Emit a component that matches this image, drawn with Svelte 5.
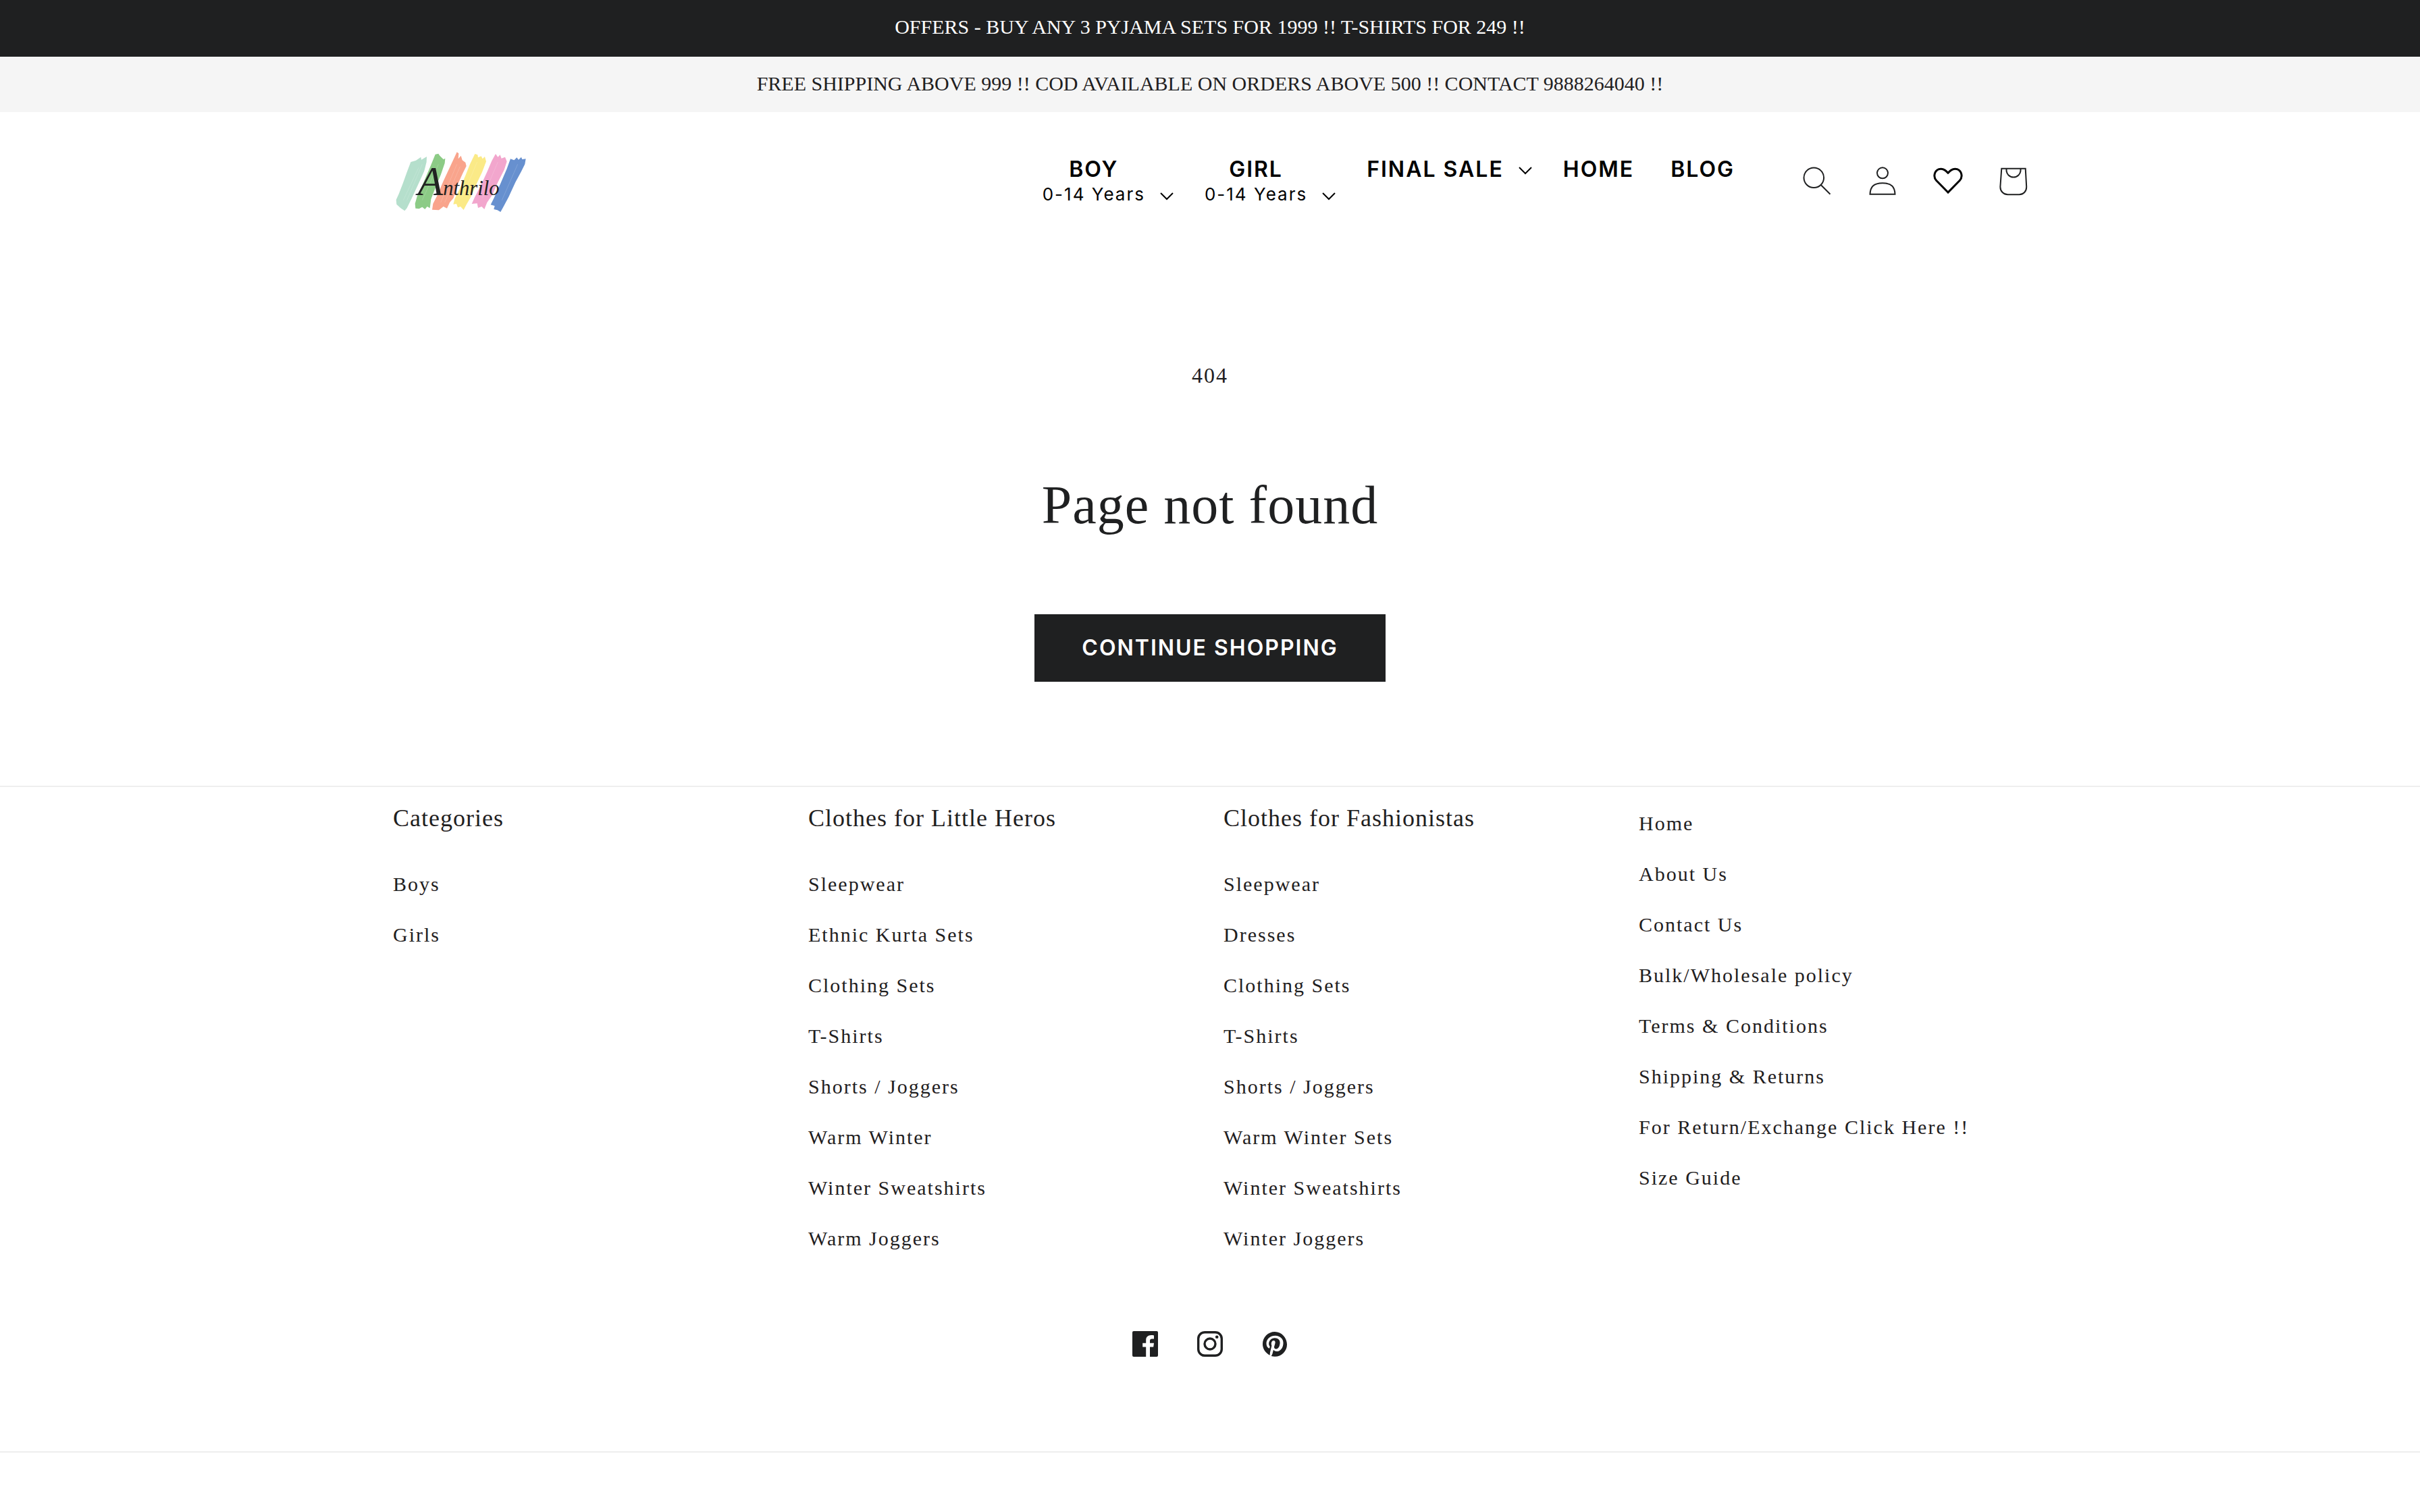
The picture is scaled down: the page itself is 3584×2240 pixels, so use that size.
<script lang="ts">
  type MenuItem = { label: string; sub?: string; dropdown?: boolean };
  type Column = { title?: string; links: string[] };

  const menu: MenuItem[] = [
    { label: 'BOY', sub: '0-14 Years', dropdown: true },
    { label: 'GIRL', sub: '0-14 Years', dropdown: true },
    { label: 'FINAL SALE', dropdown: true },
    { label: 'HOME' },
    { label: 'BLOG' },
  ];

  const columns: Column[] = [
    { title: 'Categories', links: ['Boys', 'Girls'] },
    {
      title: 'Clothes for Little Heros',
      links: ['Sleepwear', 'Ethnic Kurta Sets', 'Clothing Sets', 'T-Shirts', 'Shorts / Joggers', 'Warm Winter', 'Winter Sweatshirts', 'Warm Joggers'],
    },
    {
      title: 'Clothes for Fashionistas',
      links: ['Sleepwear', 'Dresses', 'Clothing Sets', 'T-Shirts', 'Shorts / Joggers', 'Warm Winter Sets', 'Winter Sweatshirts', 'Winter Joggers'],
    },
    {
      links: ['Home', 'About Us', 'Contact Us', 'Bulk/Wholesale policy', 'Terms & Conditions', 'Shipping & Returns', 'For Return/Exchange Click Here !!', 'Size Guide'],
    },
  ];

  let openMenu = $state<string | null>(null);

  function toggle(label: string) {
    openMenu = openMenu === label ? null : label;
  }
</script>

{#snippet menuText(item: MenuItem)}
  <span class="menu-text">
    <span class="menu-label">{item.label}</span>
    {#if item.sub}<span class="menu-sub">{item.sub}</span>{/if}
  </span>
{/snippet}

<div class="bar bar-dark">OFFERS - BUY ANY 3 PYJAMA SETS FOR 1999 !! T-SHIRTS FOR 249 !!</div>
<div class="bar bar-light">FREE SHIPPING ABOVE 999 !! COD AVAILABLE ON ORDERS ABOVE 500 !! CONTACT 9888264040 !!</div>

<header class="page-width header">
  <a class="logo" href="#home" aria-label="Anthrilo">
    <svg viewBox="66 54 600 300" width="200" height="100">
      <path fill="#b5dfcc" d="M145 120 L168 113 L190 98 L192 110 L216 96 L215 120 L205 160 L180 215 L150 280 L128 325 L118 337 L100 325 L82 308 L80 288 L92 262 L110 215 L128 165Z" />
      <path fill="#8ccb86" d="M254 86 L268 83 L274 92 L290 108 L298 104 L296 125 L278 178 L262 215 L235 285 L230 325 L218 318 L208 330 L196 320 L182 328 L166 326 L164 305 L174 270 L200 215 L232 140Z" />
      <path fill="#f9a48c" d="M350 76 L358 82 L356 106 L368 92 L374 112 L388 122 L392 138 L376 170 L350 228 L335 280 L318 300 L306 326 L290 318 L270 334 L240 332 L244 305 L262 270 L290 205 L320 140Z" />
      <path fill="#fbea87" d="M430 84 L442 88 L444 100 L458 94 L464 106 L474 96 L480 118 L462 165 L436 220 L412 275 L392 310 L380 333 L366 318 L354 322 L348 306 L334 308 L340 284 L362 240 L388 180 L408 130Z" />
      <path fill="#f2a6cd" d="M522 84 L532 98 L542 88 L548 104 L564 98 L572 118 L560 155 L532 210 L508 265 L484 300 L472 330 L460 318 L444 324 L440 304 L416 306 L430 275 L456 225 L486 160 L505 115Z" />
      <path fill="#6790cf" d="M588 106 L604 112 L616 100 L624 110 L636 98 L640 108 L656 106 L652 130 L636 162 L610 210 L580 275 L556 320 L544 342 L530 334 L514 330 L518 315 L500 310 L515 280 L544 215 L572 150Z" />
      <g stroke="#fff" stroke-width="2" opacity=".25">
        <path d="M196 130 L128 290M180 145 L112 290M268 130 L196 290M350 130 L278 300M364 140 L296 300M440 120 L372 280M532 120 L464 280M620 130 L550 290" />
      </g>
      <text class="logo-text" x="176" y="268"><tspan class="logo-initial">A</tspan>nthrilo</text>
    </svg>
  </a>

  <nav class="menu" aria-label="Main">
    {#each menu as item}
      {#if item.dropdown}
        <button class="menu-item" aria-expanded={openMenu === item.label} onclick={() => toggle(item.label)}>
          {@render menuText(item)}
          <svg class="chevron" viewBox="0 0 20 12" width="20" height="12"><path d="M1 1 10 10 19 1" /></svg>
        </button>
      {:else}
        <a class="menu-item" href="#{item.label.toLowerCase()}">{@render menuText(item)}</a>
      {/if}
    {/each}
  </nav>

  <div class="icons">
    <button aria-label="Search">
      <svg viewBox="0 0 44 44"><circle cx="17.3" cy="17.3" r="14.8" /><path d="M28 28.2 41.5 41.8" /></svg>
    </button>
    <a href="#account" aria-label="Log in">
      <svg viewBox="0 0 44 44"><circle cx="22" cy="10.3" r="8" /><path d="M3.5 41.8C3.8 31 8.5 25.2 22 25.2S40.2 31 40.5 41.8Z" /></svg>
    </a>
    <a class="wishlist" href="#wishlist" aria-label="Wishlist">
      <svg viewBox="0 0 44 44"><path d="M22 39 4.8 21.5C-1 15 2.5 4.5 11.5 4.3 16 4.2 18.5 6.8 22 10.2 25.5 6.8 28 4.2 32.5 4.3 41.5 4.5 45 15 39.2 21.5Z" /></svg>
    </a>
    <a href="#cart" aria-label="Cart">
      <svg viewBox="0 0 44 44"><path d="M4.3 3.7H39.7L41.2 30.5C41.4 37.5 36.5 42.3 30.5 42.3H13.5C7.5 42.3 2.2 37.5 2.4 30.5ZM11.5 4V6A10.5 10.5 0 0 0 32.5 6V4" /></svg>
    </a>
  </div>
</header>

<main class="not-found">
  <p>404</p>
  <h1>Page not found</h1>
  <a class="btn" href="#collections">CONTINUE SHOPPING</a>
</main>

<footer>
  <div class="page-width columns">
    {#each columns as column}
      <div>
        {#if column.title}<h2>{column.title}</h2>{/if}
        <ul class:untitled={!column.title}>
          {#each column.links as link}
            <li><a href="#{link}">{link}</a></li>
          {/each}
        </ul>
      </div>
    {/each}
  </div>

  <div class="social">
    <a href="#facebook" aria-label="Facebook">
      <svg viewBox="0 0 38 38"><path d="M2 0H36Q38 0 38 2V36Q38 38 36 38H26V23.500H31.200L32 17.800H26V14.200C26 12.400 27 11.600 29 11.600H32V6.400C31 6.200 29.500 6 27.800 6 23 6 20.200 8.800 20.200 13.500V17.800H15.200V23.500H20.200V38H2Q0 38 0 36V2Q0 0 2 0Z" /></svg>
    </a>
    <a href="#instagram" aria-label="Instagram">
      <svg viewBox="0 0 38 38">
        <rect x="1.700" y="1.700" width="34.600" height="34.600" rx="9.500" fill="none" stroke="currentColor" stroke-width="3.400" />
        <circle cx="19" cy="19" r="8" fill="none" stroke="currentColor" stroke-width="3.400" />
        <circle cx="29.200" cy="8.800" r="2.300" />
      </svg>
    </a>
    <a href="#pinterest" aria-label="Pinterest">
      <svg viewBox="0 0 24 24"><path d="M12 .6C5.7.6.6 5.7.6 12c0 4.700 2.800 8.700 6.800 10.500 0-.8 0-1.800.2-2.700l1.500-6.200s-.4-.7-.4-1.800c0-1.700 1-2.900 2.200-2.900 1 0 1.500.8 1.500 1.700 0 1-.7 2.600-1 4-.3 1.200.6 2.200 1.800 2.200 2.100 0 3.600-2.800 3.600-6 0-2.500-1.700-4.400-4.800-4.400-3.500 0-5.600 2.600-5.600 5.500 0 1 .3 1.700.8 2.200.2.3.2.4.1.7l-.2 1c-.1.3-.3.4-.6.3-1.600-.7-2.400-2.400-2.400-4.500 0-3.300 2.800-7.300 8.400-7.300 4.500 0 7.400 3.200 7.400 6.700 0 4.600-2.600 8-6.300 8-1.300 0-2.400-.7-2.900-1.400 0 0-.7 2.700-.8 3.300-.3.9-.7 1.800-1.200 2.500 1 .3 2.100.5 3.300.5 6.300 0 11.400-5.100 11.400-11.400S18.300.6 12 .6z" /></svg>
    </a>
  </div>
</footer>

<style>
  :global(body) {
    margin: 0;
    background: #fff;
    color: #1f2021;
    font-family: 'Liberation Serif', 'Times New Roman', serif;
  }

  a { color: inherit; text-decoration: none; }

  button {
    padding: 0;
    border: 0;
    background: none;
    color: inherit;
    cursor: pointer;
  }

  .page-width {
    max-width: 2420px;
    margin: 0 auto;
    padding: 0 80px;
  }

  .bar {
    padding: 20px 40px 22px;
    font-size: 30px;
    line-height: 40px;
    text-align: center;
  }

  .bar-dark {
    padding-bottom: 24px;
    background: #1f2021;
    color: #fff;
  }

  .bar-light { background: #f5f5f5; }

  .header {
    display: flex;
    align-items: center;
    padding-top: 40px;
    padding-bottom: 40px;
  }

  .logo {
    display: flex;
    margin-right: auto;
    padding: 12px 0;
  }

  .logo-text {
    font-size: 92px;
    font-style: italic;
    fill: #222;
  }

  .logo-initial { font-size: 184px; }

  .menu {
    display: flex;
    align-items: flex-start;
    gap: 46px;
    margin-right: 92px;
    padding-top: 4px;
    font-family: Inter, sans-serif;
    color: #000;
  }

  .menu-item {
    display: flex;
    gap: 22px;
    align-items: flex-end;
    font-family: inherit;
    letter-spacing: 2px;
  }

  a.menu-item { padding-right: 8px; }

  .menu-text {
    display: flex;
    flex-direction: column;
    align-items: center;
  }

  .menu-label {
    font-size: 32px;
    font-weight: 600;
    line-height: 36px;
  }

  .menu-sub {
    font-size: 26px;
    line-height: 38px;
  }

  .chevron {
    margin-bottom: 10px;
    fill: none;
    stroke: #000;
    stroke-width: 2;
  }

  .icons {
    display: flex;
    gap: 53px;
    margin-right: -2px;
  }

  .icons svg {
    display: block;
    width: 44px;
    height: 44px;
    fill: none;
    stroke: currentColor;
    stroke-width: 2;
  }

  .icons .wishlist svg {
    stroke: #000;
    stroke-width: 3;
  }

  .not-found {
    padding: 156px 40px 154px;
    text-align: center;
  }

  .not-found p {
    margin: 0;
    font-size: 32px;
    line-height: 60px;
    letter-spacing: 2px;
  }

  h1 {
    margin: 110px 0;
    font-size: 80px;
    font-weight: 400;
    line-height: 104px;
    letter-spacing: 1px;
  }

  .btn {
    display: inline-block;
    min-width: 392px;
    padding: 0 64px;
    background: #1f2021;
    color: #fff;
    font-family: Inter, sans-serif;
    font-size: 32px;
    font-weight: 600;
    line-height: 100px;
    letter-spacing: 2px;
    vertical-align: top;
  }

  footer {
    border-top: 2px solid #eee;
    border-bottom: 2px solid #eee;
  }

  .columns {
    display: grid;
    grid-template-columns: repeat(4, 1fr);
    gap: 40px;
    padding-top: 22px;
  }

  h2 {
    margin: 0 0 36px;
    font-size: 36px;
    font-weight: 400;
    line-height: 48px;
    letter-spacing: 1px;
  }

  ul {
    margin: 0;
    padding: 0;
    list-style: none;
  }

  .untitled { margin-top: -6px; }

  li {
    font-size: 30px;
    line-height: 75px;
    letter-spacing: 2px;
  }

  .social {
    display: flex;
    justify-content: center;
    gap: 58px;
    padding: 100px 0 140px;
  }

  .social svg {
    display: block;
    width: 38px;
    height: 38px;
    fill: currentColor;
  }
</style>
